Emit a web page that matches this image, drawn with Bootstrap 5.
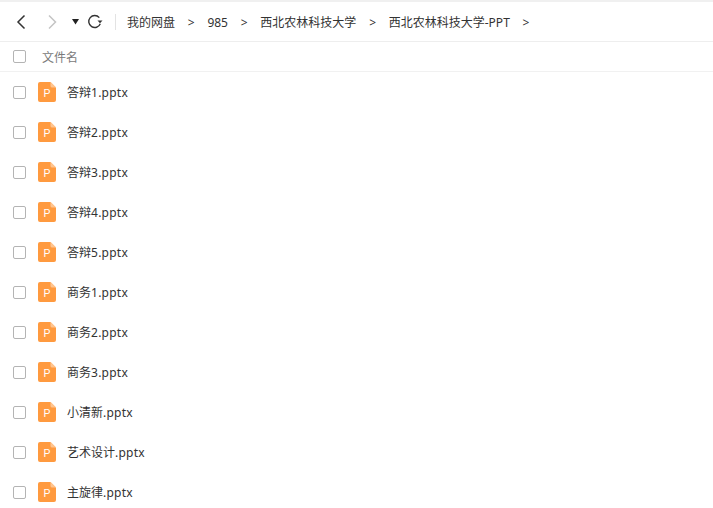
<!DOCTYPE html>
<html lang="zh">
<head>
<meta charset="utf-8">
<title>文件</title>
<link rel="stylesheet" href="https://cdn.jsdelivr.net/npm/bootstrap@5.3.0/dist/css/bootstrap.min.css">
<style>
html,body{height:100%}
body{font-family:"Noto Sans","Noto Sans CJK SC",sans-serif;font-size:12px;color:#333;background:#fff;overflow:hidden}
.topbar{height:42px;border-top:2px solid #f0f0f0;border-bottom:1px solid #eeeeee;padding-left:15px}
.navbtn{display:block;flex:none}
.nb1{width:12px;height:16px;margin-right:19px}
.nb2{width:12px;height:16px;margin-right:13px}
.nb3{width:10px;height:6px;margin-right:6px}
.nb4{width:16px;height:16px;margin-right:12px}
.vsep{width:1px;height:16px;background:#e3e3e3;margin-right:11px}
.crumb,.arrow,.lbl,.fname{padding-top:2px;white-space:nowrap}
.arrow{margin:0 12.75px}
.tick{width:13px;height:13px;border:1px solid #b4b4b4;border-radius:2px;background:#fff;flex:none;margin-left:13px}
.headrow{height:30px;border-bottom:1px solid #f1f1f1;color:#7a7a7a}
.headrow .lbl{margin-left:16px}
.filerow{height:40px}
.ficon{width:18px;height:20px;margin-left:12px;margin-right:11px;flex:none;display:block}
.latinpart{letter-spacing:.25px}
</style>
</head>
<body>
<div class="topbar d-flex align-items-center">
  <svg class="navbtn nb1" viewBox="0 0 12 16"><path d="M9.500 1.500 3 8l6.500 6.500" fill="none" stroke="#333" stroke-width="1.500"/></svg>
  <svg class="navbtn nb2" viewBox="0 0 12 16"><path d="M3 1.500 9.500 8 3 14.500" fill="none" stroke="#c4c4c4" stroke-width="1.500"/></svg>
  <svg class="navbtn nb3" viewBox="0 0 10 6"><path d="M1 0h7L4.500 5.500z" fill="#222"/></svg>
  <svg class="navbtn nb4" viewBox="0 0 16 16"><path d="M13.300 9.800A6 6 0 1 1 12.300 3.600" fill="none" stroke="#333" stroke-width="1.400"/><path d="M10.500 6.500h5L13 9.200z" fill="#333"/></svg>
  <div class="vsep"></div>
  <span class="crumb">我的网盘</span><span class="arrow">&gt;</span>
  <span class="crumb">985</span><span class="arrow">&gt;</span>
  <span class="crumb">西北农林科技大学</span><span class="arrow">&gt;</span>
  <span class="crumb">西北农林科技大学-PPT</span><span class="arrow">&gt;</span>
</div>
<div class="headrow d-flex align-items-center">
  <span class="tick"></span><span class="lbl">文件名</span>
</div>
<div id="rows"></div>
<template id="rowT">
  <div class="filerow d-flex align-items-center">
    <span class="tick"></span>
    <svg class="ficon" viewBox="0 0 18 20"><path d="M2 0h10.500L18 5.500V18a2 2 0 0 1-2 2H2a2 2 0 0 1-2-2V2a2 2 0 0 1 2-2z" fill="#ff9a3f"/><path d="M12.500 0 18 5.500h-4a1.500 1.500 0 0 1-1.500-1.500z" fill="#ffc48f"/><text x="9" y="14.500" text-anchor="middle" font-family="Liberation Sans" font-size="10.500" fill="#fff">P</text></svg>
    <span class="fname"><span class="cjkpart"></span><span class="latinpart"></span></span>
  </div>
</template>
<script>
var names=[["答辩","1.pptx"],["答辩","2.pptx"],["答辩","3.pptx"],["答辩","4.pptx"],["答辩","5.pptx"],["商务","1.pptx"],["商务","2.pptx"],["商务","3.pptx"],["小清新",".pptx"],["艺术设计",".pptx"],["主旋律",".pptx"]];
var t=document.getElementById('rowT'),r=document.getElementById('rows');
names.forEach(function(n){var c=t.content.cloneNode(true);c.querySelector('.cjkpart').textContent=n[0];c.querySelector('.latinpart').textContent=n[1];r.appendChild(c);});
</script>
<script src="https://cdn.jsdelivr.net/npm/bootstrap@5.3.0/dist/js/bootstrap.bundle.min.js"></script>
</body>
</html>
